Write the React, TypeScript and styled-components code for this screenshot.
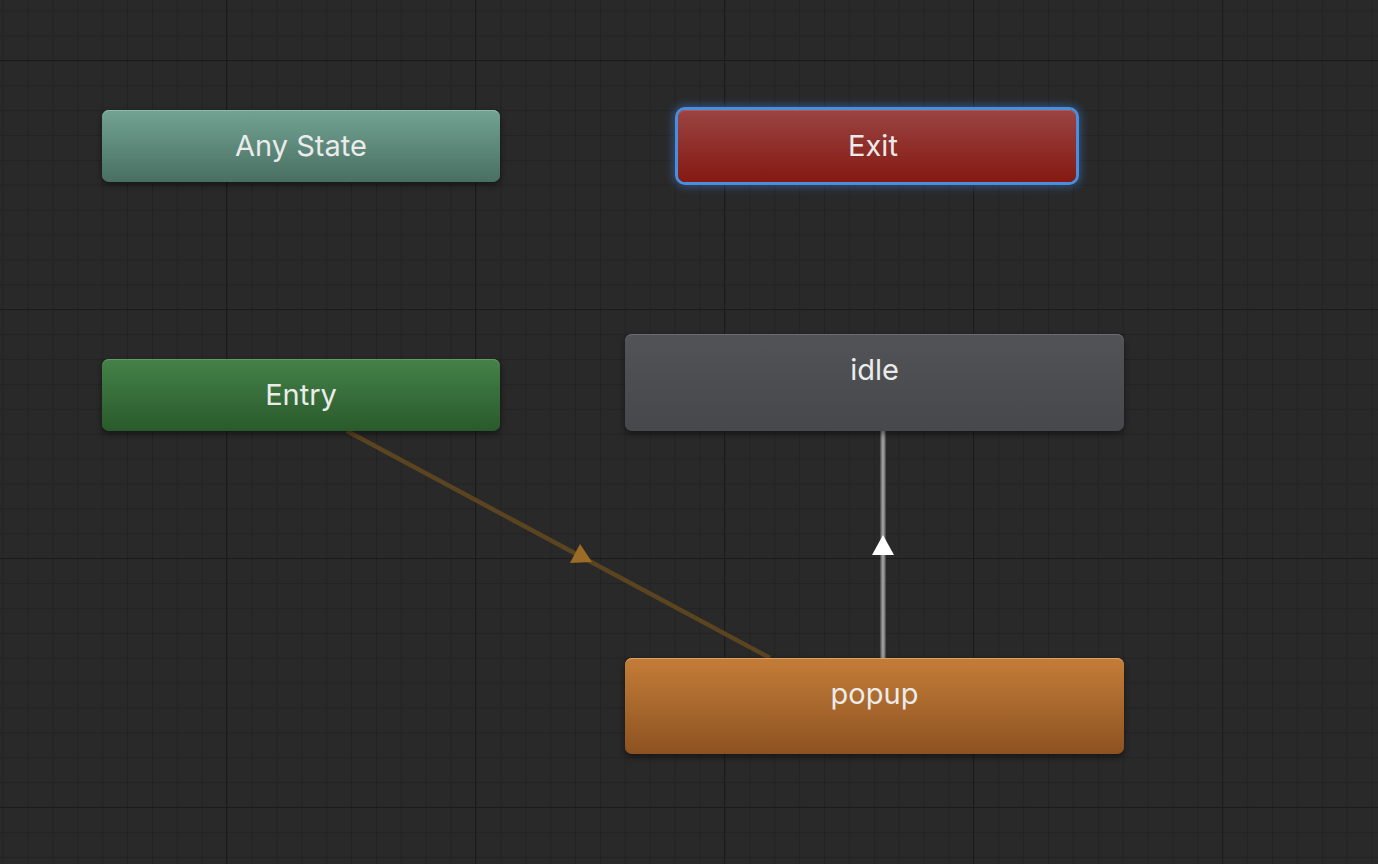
import React from 'react';
import styled, {createGlobalStyle, css} from 'styled-components';

const GlobalStyle = createGlobalStyle`
    html, body {
        margin: 0;
        padding: 0;
        background: #282828;
        overflow: hidden;
    }
    * {
        box-sizing: border-box;
    }
`;

type NodeKind = 'any' | 'entry' | 'exit' | 'state' | 'default';

const palette: Record<NodeKind, {top: string; bottom: string; rim: string}> = {
    any: {top: '#72a393', bottom: '#486f62', rim: '#8dbbad'},
    entry: {top: '#458249', bottom: '#295a2b', rim: '#5f9a62'},
    exit: {top: '#9a4442', bottom: '#851912', rim: '#b05a57'},
    state: {top: '#525357', bottom: '#47484c', rim: '#6b6c70'},
    default: {top: '#c47d38', bottom: '#8c5221', rim: '#e0a063'},
};

const Canvas = styled.div`
    position: relative;
    width: 1378px;
    height: 864px;
    overflow: hidden;
    background-color: #292929;
    background-image:
        linear-gradient(to right, #1b1b1b 1px, transparent 1px),
        linear-gradient(to bottom, #1b1b1b 1px, transparent 1px),
        linear-gradient(to right, #232323 1px, transparent 1px),
        linear-gradient(to bottom, #232323 1px, transparent 1px);
    background-size: 249px 249px, 249px 249px, 24.9px 24.9px, 24.9px 24.9px;
    background-position: 226px 0, 0 60px, 2.6px 0, 0 10.5px;
    font-family: Inter, "Noto Sans", "Liberation Sans", sans-serif;
`;

const Edges = styled.svg`
    position: absolute;
    inset: 0;
    width: 1378px;
    height: 864px;
`;

const Node = styled.div<{$kind: NodeKind; $x: number; $y: number; $w: number; $h: number; $top?: boolean; $selected?: boolean}>`
    position: absolute;
    left: ${({$x}) => $x}px;
    top: ${({$y}) => $y}px;
    width: ${({$w}) => $w}px;
    height: ${({$h}) => $h}px;
    display: flex;
    justify-content: center;
    align-items: ${({$top}) => ($top ? 'flex-start' : 'center')};
    padding-top: ${({$top}) => ($top ? '21px' : '0')};
    padding-bottom: ${({$top}) => ($top ? '0' : '2px')};
    border-radius: 7px;
    color: #ebebeb;
    font-size: 29px;
    background: linear-gradient(to bottom, ${({$kind}) => palette[$kind].top}, ${({$kind}) => palette[$kind].bottom});
    box-shadow: inset 0 1px 0 ${({$kind}) => palette[$kind].rim}, 0 3px 6px rgba(0, 0, 0, 0.45);
    ${({$selected}) =>
        $selected &&
        css`
            padding-right: 8px;
            box-shadow: inset 0 1px 0 #b05a57, 0 0 0 3px #4a8fdf, 0 0 8px 5px rgba(60, 130, 220, 0.45);
        `}
`;

const Label = styled.span`
    line-height: 1;
`;

const App = () => {
    return (
        <>
            <GlobalStyle/>
            <Canvas>
                <Edges viewBox="0 0 1378 864">
                    <line x1={347} y1={431} x2={770} y2={658} stroke="#5b4420" strokeWidth={4.5}/>
                    <polygon points="580,544 570,563 592,562" fill="#9c6b25"/>
                    <line x1={883} y1={431} x2={883} y2={658} stroke="#7c7c7c" strokeWidth={5}/>
                    <line x1={883} y1={431} x2={883} y2={658} stroke="#9a9a9a" strokeWidth={2}/>
                    <polygon points="883,535 872,555 894,555" fill="#ffffff"/>
                </Edges>
                <Node $kind="any" $x={102} $y={110} $w={398} $h={72}>
                    <Label>Any State</Label>
                </Node>
                <Node $kind="exit" $x={678} $y={110} $w={398} $h={72} $selected>
                    <Label>Exit</Label>
                </Node>
                <Node $kind="entry" $x={102} $y={359} $w={398} $h={72}>
                    <Label>Entry</Label>
                </Node>
                <Node $kind="state" $x={625} $y={334} $w={499} $h={97} $top>
                    <Label>idle</Label>
                </Node>
                <Node $kind="default" $x={625} $y={658} $w={499} $h={96} $top>
                    <Label>popup</Label>
                </Node>
            </Canvas>
        </>
    );
};

export default App;
